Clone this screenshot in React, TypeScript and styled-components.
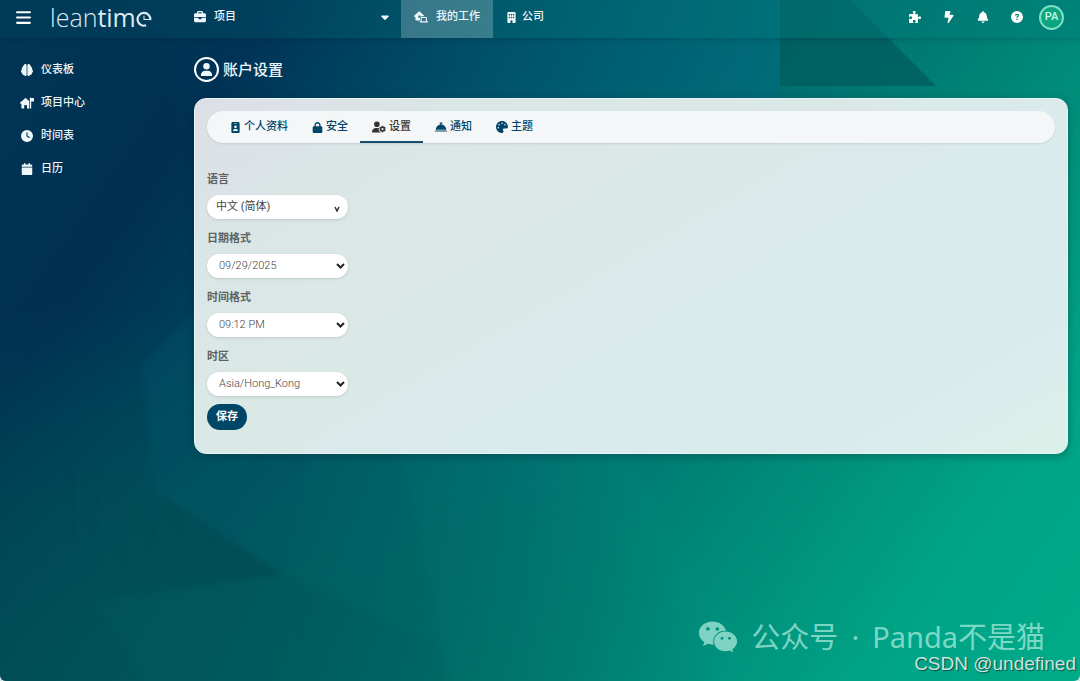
import React from 'react';
import styled, { createGlobalStyle } from 'styled-components';
import {
  FaBars, FaBell, FaBellConcierge, FaBoltLightning, FaBrain, FaBriefcase,
  FaBuilding, FaCalendar, FaCaretDown, FaCircleQuestion, FaClock, FaHouseFlag, FaHouseLaptop,
  FaIdBadge, FaLock, FaPalette, FaPuzzlePiece, FaUser, FaUserGear, FaWeixin,
} from 'react-icons/fa6';

const cjk = '"Noto Sans CJK SC", sans-serif';

const GlobalStyle = createGlobalStyle`
  *, *::before, *::after { box-sizing: border-box; }
  html, body, #root { height: 100%; }
  body {
    margin: 0;
    font-family: Roboto, ${cjk};
    font-size: 11px;
    line-height: 18px;
    color: #eef7fa;
    background: #d5e6e6;
  }
  a { color: inherit; text-decoration: none; }
  svg { display: block; flex: none; }
  h1, ul { margin: 0; padding: 0; }
  ul { list-style: none; }
`;

const Page = styled.div`
  position: relative;
  isolation: isolate;
  min-height: 100%;
  display: flex;
  flex-direction: column;
  overflow: hidden;
  border-radius: 0 0 6px 6px;
  background: linear-gradient(125deg, #003655 0%, #003052 18%, #004a60 34%, #00686e 50%, #008576 68%, #00a386 86%, #00ab89 100%);
`;

const Backdrop = styled.svg`
  position: absolute;
  inset: 0;
  width: 100%;
  height: 100%;
  z-index: -1;
`;

const TopBar = styled.header`
  display: flex;
  align-items: center;
  height: 38px;
  background: linear-gradient(90deg, rgba(0, 80, 110, 0.15), rgba(0, 125, 120, 0.5));
  box-shadow: 0 1px 5px rgba(0, 30, 50, 0.25);
`;

const Brand = styled.div`
  flex: none;
  width: 181px;
  padding: 0 0 4px 15px;
  display: flex;
  align-items: center;
  gap: 18px;
`;

const IconButton = styled.button<{ $size?: number }>`
  display: flex;
  padding: 0;
  border: 0;
  background: none;
  color: #fff;
  font-size: ${(p) => p.$size ?? 12}px;
  cursor: pointer;
`;

const Logo = styled.a`
  display: flex;
  align-items: center;
  font-family: "Open Sans", sans-serif;
  font-size: 25px;
  line-height: 34px;
  font-weight: 300;
  color: #dcebf0;
`;

const LogoStrong = styled.span`
  font-weight: 400;
`;

const LogoDial = styled.span`
  padding-top: 4px;
`;

const MainNav = styled.nav`
  display: flex;
  height: 100%;
`;

const NavLink = styled.a<{ $active?: boolean; $wide?: boolean; $gap?: number }>`
  display: flex;
  align-items: center;
  gap: ${(p) => p.$gap ?? 8}px;
  width: ${(p) => (p.$wide ? '220px' : 'auto')};
  padding: 0 ${(p) => (p.$wide ? 10 : 13)}px 4px 13px;
  font-weight: 500;
  background: ${(p) => (p.$active ? 'rgba(255, 255, 255, 0.22)' : 'none')};
`;

const NavCaret = styled.span`
  margin-left: auto;
`;

const Tools = styled.div`
  margin-left: auto;
  padding: 0 16px 4px 0;
  display: flex;
  align-items: center;
  gap: 22px;
`;

const Avatar = styled.button`
  width: 25px;
  height: 25px;
  margin-left: -6px;
  padding: 0;
  border: 2px solid #7fe0c6;
  border-radius: 50%;
  background: #0ba57f;
  color: #c9f7e8;
  font: 500 11px/20px Roboto, sans-serif;
`;

const Body = styled.div`
  flex: 1;
  display: flex;
`;

const Sidebar = styled.nav`
  flex: none;
  width: 194px;
  padding: 23px 0 0 20px;
`;

const SideList = styled.ul`
  display: grid;
  gap: 15px;
`;

const SideLink = styled.a`
  display: flex;
  align-items: center;
  gap: 7px;
  font-weight: 500;
`;

const SideIcon = styled.span`
  display: grid;
  place-items: center;
  width: 14px;
  height: 18px;
`;

const Main = styled.main`
  flex: 1;
  min-width: 0;
  padding: 19px 12px 24px 0;
`;

const TitleRow = styled.div`
  display: flex;
  align-items: center;
  gap: 4px;
  margin-bottom: 16px;
`;

const TitleIcon = styled.span`
  display: grid;
  place-items: center;
  width: 25px;
  height: 25px;
  border: 2px solid #fff;
  border-radius: 50%;
`;

const Title = styled.h1`
  font-size: 15px;
  line-height: 24px;
  font-weight: 500;
`;

const Card = styled.section`
  padding: 12px 12px 23px;
  border: 1px solid #e6f5f5;
  border-radius: 12px;
  background: linear-gradient(150deg, #dddfe7 0%, #dae7e6 22%, #dae8e6 42%, #daebee 60%, #daebee 84%, #dcf1e9 100%);
  box-shadow: 0 2px 8px rgba(0, 30, 40, 0.35);
`;

const Tabs = styled.nav`
  display: flex;
  height: 32px;
  padding-left: 11px;
  border-radius: 16px;
  background: #f5f6f7;
  box-shadow: 0 1px 2px rgba(0, 0, 0, 0.1);
`;

const Tab = styled.a<{ $active?: boolean }>`
  display: flex;
  align-items: center;
  gap: 3px;
  padding: 0 12px;
  font-weight: 500;
  color: ${(p) => (p.$active ? '#333' : '#00466a')};
  box-shadow: ${(p) => (p.$active ? 'inset 0 -2px #1b4f72' : 'none')};
`;

const Form = styled.form`
  display: grid;
  justify-items: start;
  gap: 8px;
  padding-top: 28px;
`;

const FieldList = styled.div`
  display: grid;
  gap: 11px;
`;

const Field = styled.div`
  display: grid;
  gap: 6px;
`;

const Label = styled.label`
  font-weight: 600;
  color: #5c6264;
`;

const SelectBox = styled.div`
  position: relative;
  width: 141px;
`;

const Select = styled.select<{ $compact?: boolean }>`
  appearance: none;
  display: block;
  width: 100%;
  height: 24px;
  padding: 0 20px 0 ${(p) => (p.$compact ? 9 : 12)}px;
  border: 0;
  border-radius: 12px;
  background: #fff;
  box-shadow: 0 1px 3px rgba(0, 0, 0, 0.12);
  font: ${(p) => (p.$compact ? 400 : 300)} 11px/24px Roboto, ${cjk};
  color: #444;
`;

const Chevron = styled.svg`
  position: absolute;
  right: 3px;
  top: 8px;
  pointer-events: none;
`;

const SmallChevron = styled(Chevron)`
  right: 8px;
  top: 11px;
`;

const SaveButton = styled.button`
  height: 26px;
  padding: 0 9px;
  border: 0;
  border-radius: 13px;
  background: #004666;
  color: #fff;
  font: 700 11px/24px Roboto, ${cjk};
`;

const ChannelMark = styled.div`
  position: absolute;
  right: 35px;
  bottom: 24px;
  display: flex;
  align-items: center;
  gap: 13px;
  font: 400 29px/32px "Noto Sans", ${cjk};
  color: rgba(180, 240, 225, 0.7);
`;

const AuthorMark = styled.div`
  position: absolute;
  right: 4px;
  bottom: 7px;
  font: 400 19px/20px "Liberation Sans", sans-serif;
  color: #cfe3de;
  text-shadow: 1px 1px 1px rgba(0, 0, 0, 0.5);
`;

const sideItems = [
  { label: '仪表板', icon: <FaBrain size={12} /> },
  { label: '项目中心', icon: <FaHouseFlag size={14} /> },
  { label: '时间表', icon: <FaClock size={12} /> },
  { label: '日历', icon: <FaCalendar size={12} /> },
];

const tabItems = [
  { label: '个人资料', icon: <FaIdBadge size={11} /> },
  { label: '安全', icon: <FaLock size={11} /> },
  { label: '设置', icon: <FaUserGear size={14} />, active: true },
  { label: '通知', icon: <FaBellConcierge size={12} /> },
  { label: '主题', icon: <FaPalette size={12} /> },
];

const fields = [
  { id: 'language', label: '语言', value: '中文 (简体)', compact: true },
  { id: 'date-format', label: '日期格式', value: '09/29/2025' },
  { id: 'time-format', label: '时间格式', value: '09:12 PM' },
  { id: 'timezone', label: '时区', value: 'Asia/Hong_Kong' },
];

function Facets() {
  return (
    <Backdrop viewBox="0 0 1080 681" preserveAspectRatio="none" aria-hidden="true">
      <defs>
        <linearGradient id="facetBlue" x1="0" y1="0" x2="1" y2="1">
          <stop offset="0" stopColor="#005a80" stopOpacity="0.22" />
          <stop offset="1" stopColor="#006a70" stopOpacity="0.14" />
        </linearGradient>
        <linearGradient id="facetDark" x1="0" y1="0" x2="1" y2="0">
          <stop offset="0" stopColor="#004a50" stopOpacity="0" />
          <stop offset="1" stopColor="#00454c" stopOpacity="0.5" />
        </linearGradient>
        <linearGradient id="facetTop" x1="0" y1="0" x2="1" y2="0">
          <stop offset="0" stopColor="#00507a" stopOpacity="0" />
          <stop offset="1" stopColor="#006a80" stopOpacity="0.6" />
        </linearGradient>
        <radialGradient id="cornerGlow" cx="0.12" cy="1" r="0.55">
          <stop offset="0" stopColor="#005452" stopOpacity="0.7" />
          <stop offset="0.5" stopColor="#005452" stopOpacity="0.45" />
          <stop offset="1" stopColor="#005452" stopOpacity="0" />
        </radialGradient>
        <filter id="soften" x="-5%" y="-5%" width="110%" height="110%">
          <feGaussianBlur stdDeviation="3" />
        </filter>
      </defs>
      <rect width="1080" height="681" fill="url(#cornerGlow)" />
      <polygon points="140,0 780,0 780,98 195,160" fill="url(#facetTop)" />
      <polygon points="780,0 850,0 936,86 780,86" fill="#005a5c" fillOpacity="0.7" />
      <g filter="url(#soften)">
        <polygon points="195,310 142,365 155,490 285,575 320,454 400,400" fill="url(#facetBlue)" />
        <polygon points="60,470 155,490 285,575 95,600" fill="url(#facetDark)" />
        <polygon points="95,602 285,575 306,690 150,690" fill="#00605c" fillOpacity="0.25" />
        <polygon points="285,575 320,440 400,440 440,645" fill="#00706e" fillOpacity="0.2" />
        <polygon points="400,440 620,440 760,690 450,690" fill="#009080" fillOpacity="0.12" />
      </g>
    </Backdrop>
  );
}

function ClockMark() {
  return (
    <svg width="16" height="16" viewBox="0 0 15 15" fill="none" stroke="currentColor" aria-hidden="true">
      <path d="M9.500 13.400A6 6 0 1 1 13.400 8.500" strokeWidth="2" />
      <path d="M7.500 4.500V8H13.500" strokeWidth="1" />
    </svg>
  );
}

export default function App() {
  return (
    <>
      <GlobalStyle />
      <Page>
        <Facets />
        <TopBar>
          <Brand>
            <IconButton $size={17} aria-label="菜单"><FaBars /></IconButton>
            <Logo href="#" aria-label="leantime">
              <span>lean<LogoStrong>tim</LogoStrong></span>
              <LogoDial><ClockMark /></LogoDial>
            </Logo>
          </Brand>
          <MainNav>
            <NavLink href="#" $wide>
              <FaBriefcase size={12} />项目
              <NavCaret><FaCaretDown size={12} /></NavCaret>
            </NavLink>
            <NavLink href="#" $active><FaHouseLaptop size={14} />我的工作</NavLink>
            <NavLink href="#" $gap={5}><FaBuilding size={11} />公司</NavLink>
          </MainNav>
          <Tools>
            <IconButton aria-label="插件"><FaPuzzlePiece /></IconButton>
            <IconButton aria-label="动态"><FaBoltLightning /></IconButton>
            <IconButton aria-label="提醒"><FaBell /></IconButton>
            <IconButton aria-label="帮助"><FaCircleQuestion /></IconButton>
            <Avatar>PA</Avatar>
          </Tools>
        </TopBar>
        <Body>
          <Sidebar>
            <SideList>
              {sideItems.map((item) => (
                <li key={item.label}>
                  <SideLink href="#"><SideIcon>{item.icon}</SideIcon>{item.label}</SideLink>
                </li>
              ))}
            </SideList>
          </Sidebar>
          <Main>
            <TitleRow>
              <TitleIcon><FaUser size={13} /></TitleIcon>
              <Title>账户设置</Title>
            </TitleRow>
            <Card>
              <Tabs>
                {tabItems.map((tab) => (
                  <Tab key={tab.label} href="#" $active={tab.active}>{tab.icon}{tab.label}</Tab>
                ))}
              </Tabs>
              <Form>
                <FieldList>
                  {fields.map((field) => (
                    <Field key={field.id}>
                      <Label htmlFor={field.id}>{field.label}</Label>
                      <SelectBox>
                        <Select id={field.id} $compact={field.compact}>
                          <option>{field.value}</option>
                        </Select>
                        {field.compact ? (
                          <SmallChevron width="6" height="6" viewBox="0 0 6 6" fill="none" stroke="#333" strokeWidth="1.5">
                            <path d="M1 1L3 5L5 1" />
                          </SmallChevron>
                        ) : (
                          <Chevron width="9" height="8" viewBox="0 0 9 8" fill="none" stroke="#222" strokeWidth="2">
                            <path d="M1 2L4.500 5.500L8 2" />
                          </Chevron>
                        )}
                      </SelectBox>
                    </Field>
                  ))}
                </FieldList>
                <SaveButton type="button">保存</SaveButton>
              </Form>
            </Card>
          </Main>
        </Body>
        <ChannelMark>
          <FaWeixin size={40} />
          <span>公众号</span>
          <span>·</span>
          <span>Panda不是猫</span>
        </ChannelMark>
        <AuthorMark>CSDN @undefined</AuthorMark>
      </Page>
    </>
  );
}
